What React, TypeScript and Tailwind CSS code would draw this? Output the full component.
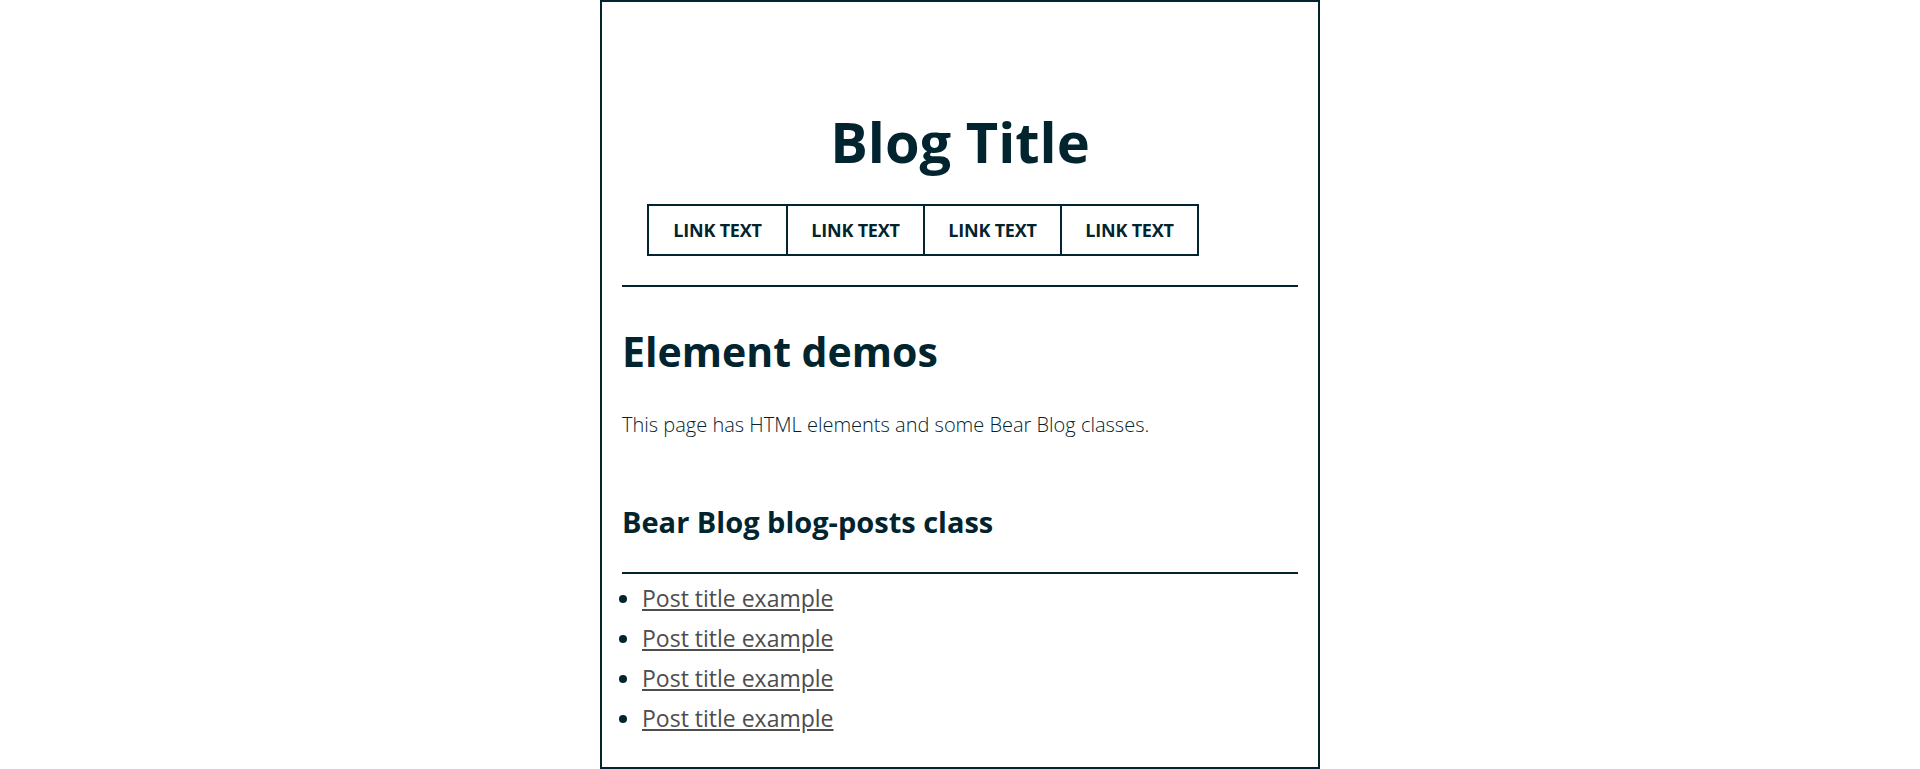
export default function App() {
  const links = ["LINK TEXT", "LINK TEXT", "LINK TEXT", "LINK TEXT"];
  const posts = [1, 2, 3, 4];

  return (
    <div className="min-h-[769px] bg-white font-['Open_Sans',sans-serif] text-[#01242e]">
      <div className="mx-auto w-[720px] min-h-[769px] border-2 border-[#01242e] px-[20px]">
        <header>
          <h1 className="mt-[106px] text-center text-[56px] font-bold leading-[1.2]">
            Blog Title
          </h1>
          <nav className="mt-[29px] ml-[25px] flex w-fit border-2 border-[#01242e]">
            {links.map((l, i) => (
              <a
                key={i}
                href="#"
                className={`block h-[48px] w-[137px] text-center text-[18px] font-bold leading-[48px] tracking-[-0.2px] text-[#01242e] ${
                  i > 0 ? "border-l-2 border-[#01242e]" : ""
                }`}
              >
                {l}
              </a>
            ))}
          </nav>
        </header>

        <hr className="mt-[29px] border-0 border-t-2 border-[#01242e]" />

        <main>
          <h2 className="mt-[40px] text-[41px] font-bold leading-[48px]">
            Element demos
          </h2>
          <p className="mt-[35px] text-[20px] font-light leading-[1.5]">
            This page has HTML elements and some Bear Blog classes.
          </p>

          <h3 className="mt-[65px] text-[29px] font-bold leading-[1.2]">
            Bear Blog blog-posts class
          </h3>
          <hr className="mt-[32px] border-0 border-t-2 border-[#01242e]" />

          <ul className="mt-[4px] list-disc pl-[20px] marker:text-[#01242e]">
            {posts.map((p) => (
              <li key={p} className="text-[23px] leading-[40px]">
                <a href="#" className="text-[#4d4d4d] underline">
                  Post title example
                </a>
              </li>
            ))}
          </ul>
        </main>
      </div>
    </div>
  );
}
